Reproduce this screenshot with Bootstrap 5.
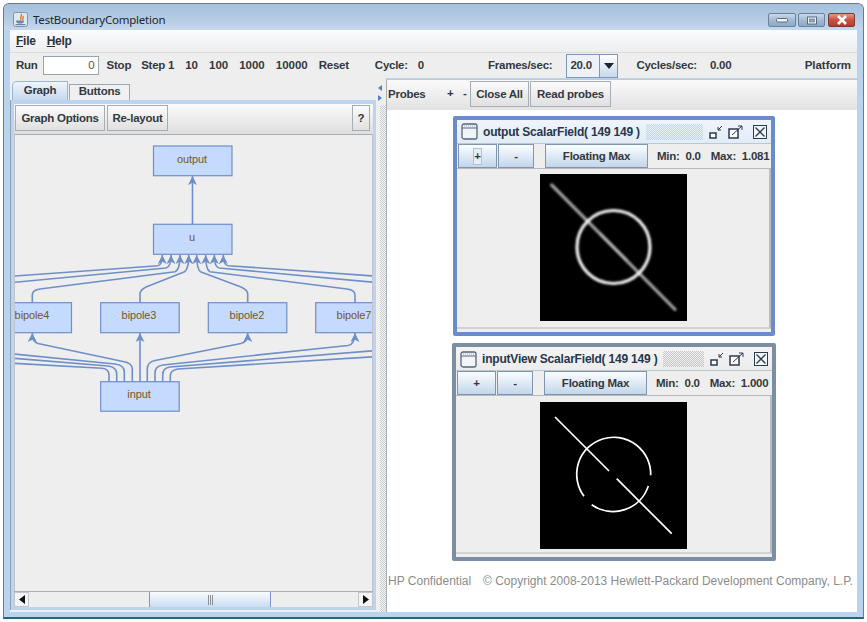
<!DOCTYPE html>
<html lang="en">
<head>
  <meta charset="UTF-8">
  <meta name="viewport" content="width=device-width, initial-scale=1">
  <title>TestBoundaryCompletion</title>
  <link href="https://cdn.jsdelivr.net/npm/bootstrap@5.3.0/dist/css/bootstrap.min.css" rel="stylesheet">
  <style>
    html, body { height: 100%; overflow: hidden; background: #fff; }
    body { font-family: "Liberation Sans", Arial, sans-serif; font-size: 11.5px; letter-spacing: -.25px; font-weight: 700; color: #33383f; }

    /* outer window */
    .app-win { position: relative; margin: 3px 3px 0 3px; width: 861px; height: 616px; border: 1px solid #6e7a86; border-bottom: 2px solid #1d6a78; border-radius: 6px 6px 0 0; background: #bad3ee; padding: 0 6px 5px 6px; overflow: hidden; }
    .win-title { height: 26px; margin: 0 -6px; padding: 8px 8px 0 9px; background: linear-gradient(#a6c0dc, #b5cce4 60%, #c5d9ee); font-weight: 400; color: #22262b; }
    .win-title-text { margin: -1px 0 0 5px; font-family: "Noto Sans", sans-serif; font-size: 11.5px; letter-spacing: -.22px; }
    .win-btns { margin-top: 1px; }
    .win-ctl { height: 14px; border: 1px solid #6d829a; border-radius: 2px; background: linear-gradient(#c9d9ea, #a3bad2 50%, #8ea8c4); }
    .win-ctl-min { width: 28px; margin-right: 2px; }
    .win-ctl-max { width: 27px; margin-right: 3px; }
    .win-ctl-close { width: 27px; border-color: #7c3a33; background: linear-gradient(#e2988a, #cc5040 50%, #b83a2c); }
    .menu-row { height: 22px; padding-left: 6px; gap: 11px; background: linear-gradient(#fbfcfd, #eceef0); font-size: 12px; color: #2f3338; }
    .menu-row u { text-decoration-thickness: 1px; }
    .tool-row { height: 26px; padding: 1px 0 0 6px; gap: 11px; background: #eeeeee; border-top: 1px solid #dcdcdc; }
    .tool-txt { padding: 0; border: 0; font: inherit; letter-spacing: inherit; color: inherit; border-radius: 0; white-space: nowrap; }
    .tool-num { letter-spacing: 0; }
    .tool-stop { margin-right: -1px; }
    .run-box { width: 56px; height: 19px; margin: -2px -3px 0 -6px; padding: 0 3px; border: 1px solid #9aa3ad; border-radius: 0; font: 400 11.5px "Liberation Sans", sans-serif; text-align: right; color: #555; }
    .gap-cycle { margin-left: 15px; }
    .gap-val { margin-left: -1px; }
    .gap-frames { margin-left: 53px; }
    .gap-rate { margin-left: 2px; }
    .fps-box { width: 52px; height: 24px; margin: -1px 7px 0 3px; border: 1px solid #7b98b8; background: #eef2f6; }
    .fps-val { width: 33px; padding-left: 3px; border-right: 1px solid #7b98b8; }
    .fps-drop { background: linear-gradient(#fff, #c6d8ea); }
    .plat-lbl { margin-right: 6px; letter-spacing: -.05px; }

    /* left pane */
    .main-row { height: 534px; }
    .left-pane { width: 367px; background: #eeeeee; padding: 0 0 2px 1px; flex-shrink: 0; }
    .tab-row { height: 22px; padding-left: 1px; border: 0; gap: 1px; }
    .tab-row .nav-link { padding: 0; margin: 0; height: 16px; width: 61px; border: 1px solid #9aa7b5; border-bottom: 0; border-radius: 0; text-align: center; font-size: 11.5px; line-height: 12px; color: #33383f; background: #f0f0f0; }
    .tab-row .nav-link.active { width: 56px; height: 19px; line-height: 17px; border-radius: 5px 0 0 0; border-color: #9ab5d3; background: linear-gradient(#f0f5fa, #c4d9f0); color: #33383f; }
    .tab-body { width: 365px; height: 510px; border: 3px solid #bcd4ef; border-top-width: 4px; box-shadow: -1px 0 0 #8fa0b3; background: #eee; }
    .graph-bar { height: 30px; gap: 2px; padding: 1px 3px 2px 1px; background: linear-gradient(#fbfbfb, #dedede); }
    .flat-btn { padding: 2px 0 0; border: 1px solid #a6adb5; border-radius: 0; background: linear-gradient(#fbfbfb, #e0e0e0); font: inherit; letter-spacing: inherit; color: #33383f; white-space: nowrap; }
    .graph-bar .flat-btn { height: 26px; }
    .btn-options { width: 90px; }
    .btn-layout { width: 61px; }
    .help-btn { width: 18px; }
    .graph-view { height: 457px; border-top: 1px solid #a8aeb4; border-left: 1px solid #c0c4c8; border-right: 1px solid #c0c4c8; background: #eeeeee; overflow: hidden; }
    .graph-view svg { display: block; }
    .node-txt { font: 400 11px "Liberation Sans", sans-serif; letter-spacing: -.1px; fill: #7a5528; text-anchor: middle; }
    .edge { fill: none; stroke: #6f8fc9; stroke-width: 1.6; }

    .h-scroll { height: 16px; border-top: 1px solid #a8aeb4; background: #f0f0f0; }
    .scroll-end { width: 15px; background: #f4f4f4; border: 1px solid #c2c6ca; }
    .scroll-track { background: #eeeeee; padding-left: 120px; padding-right: 87px; }
    .scroll-thumb { height: 100%; border-left: 1px solid #7a9acb; border-right: 1px solid #7a9acb; background: linear-gradient(#fafcfe, #c8dcf1); }
    .grip-bar { width: 5px; height: 10px; background: repeating-linear-gradient(90deg, #8c9198 0 1px, transparent 1px 2px); }

    /* splitter */
    .split-bar { width: 9px; background: #eee; padding-top: 7px; flex-shrink: 0; }
    .split-dots { flex: 1; margin-left: 3px; margin-top: 4px; background: repeating-conic-gradient(#c6cacd 0 25%, #f6f6f6 0 50%) 0 0 / 2px 2px; }

    /* right pane */
    .right-pane { width: 471px; background: #fff; border-left: 1px solid #a8aeb4; margin-top: 1px; border-top: 1px solid #c5c9ce; }
    .probe-bar { height: 30px; padding: 1px 0 3px 1px; background: linear-gradient(#fafafa, #e2e2e2); }
    .probe-bar .flat-btn { height: 26px; }
    .probe-lbl { width: 59px; padding-top: 1px; }
    .probe-pm { width: 16px; }
    .probe-mn { width: 7px; }
    .btn-close-all { width: 59px; }
    .btn-read { width: 81px; margin-left: 1px; }
    .probe-desk { flex: 1; }
    .probe-win { position: absolute; left: 66px; width: 322px; border: 4px solid #6a8ccb; border-radius: 2px; background: #eee; }
    .probe-win.first { top: 6px; height: 220px; }
    .probe-win.second { top: 233px; left: 65px; width: 324px; height: 218px; border-color: #7b8ea3; }
    .probe-head { height: 23px; padding: 0 3px 0 4px; background: linear-gradient(#eff4fa, #e2ecf6); font-size: 12px; letter-spacing: -.2px; color: #27364d; }
    .probe-win.second .probe-head { padding-top: 1px; background: linear-gradient(#f4f4f4, #ececec); }
    .probe-name { margin-left: 5px; white-space: nowrap; }
    .probe-grip { flex: 1; height: 16px; margin: 0 6px; background: repeating-conic-gradient(#c3d4ea 0 25%, transparent 0 50%) 0 0 / 2px 2px; }
    .probe-win.second .probe-grip { background: repeating-conic-gradient(#c8c8c8 0 25%, transparent 0 50%) 0 0 / 2px 2px; }
    .ico-max { margin-left: 5px; }
    .ico-close { margin-left: 10px; }
    .probe-tools { height: 26px; border-top: 1px solid #b9c7d6; border-bottom: 1px solid #b4bac0; background: #eee; padding-left: 1px; white-space: nowrap; overflow: hidden; }
    .blue-btn { height: 100%; padding: 2px 0 0; border: 1px solid #7f96b1; border-radius: 0; background: linear-gradient(#fbfdff, #c3d6ea); font: inherit; letter-spacing: inherit; color: #33383f; }
    .btn-plus { width: 39px; }
    .btn-minus { width: 36px; margin-left: 1px; }
    .btn-float { width: 103px; margin-left: 11px; }
    .focus-mark { display: inline-block; width: 9px; height: 17px; line-height: 15px; border: 1px solid #b3c0cf; background: #e6edf4; }
    .probe-stats { margin-left: 9px; padding-top: 1px; }
    .probe-stats span + span { margin-left: 10px; }
    .probe-view { height: 160px; padding: 5px 0 0 83px; border-right: 2px solid #b8bcc1; border-bottom: 2px solid #d0d3d6; }
    .probe-win.second .probe-view { padding: 6px 0 0 84px; height: 158px; }
    .field-img { display: block; width: 147px; height: 147px; background: #000; }
    .copy-line { height: 42px; padding: 0 0 22px 1px; font-weight: 400; font-size: 12px; letter-spacing: 0; color: #8b8b8b; white-space: nowrap; }
    .copy-gap { width: 95px; }
  </style>
</head>
<body>
  <div class="app-win d-flex flex-column">

    <div class="win-title d-flex align-items-start">
      <svg width="15" height="15" viewBox="0 0 15 15">
        <rect x=".5" y=".5" width="14" height="14" rx="2" fill="#dfe7f0" stroke="#7f93aa"/>
        <path d="M8 2c2 2-2 3 0 6M10 4c1 1.5-1 2 0 4" fill="none" stroke="#d9772b" stroke-width="1.4"/>
        <path d="M3 8.5h8c0 2.5-1.5 3-4 3s-4-.5-4-3z" fill="#6d86a6"/>
        <rect x="2.5" y="12" width="10" height="1.2" fill="#6d86a6"/>
      </svg>
      <span class="win-title-text">TestBoundaryCompletion</span>
      <div class="win-btns ms-auto d-flex">
        <div class="win-ctl win-ctl-min d-flex align-items-center justify-content-center">
          <svg width="12" height="6"><rect x=".5" y="1.5" width="11" height="3.5" rx="1" fill="#f4f7fa" stroke="#566b82"/></svg>
        </div>
        <div class="win-ctl win-ctl-max d-flex align-items-center justify-content-center">
          <svg width="12" height="9"><rect x="1.5" y="1" width="9" height="7" fill="#f4f7fa" stroke="#566b82"/><rect x="3.5" y="3" width="5" height="3" fill="#8ea8c4" stroke="#566b82" stroke-width=".6"/></svg>
        </div>
        <div class="win-ctl win-ctl-close d-flex align-items-center justify-content-center">
          <svg width="14" height="10"><path d="M3 1l8 8M11 1l-8 8" stroke="#fff" stroke-width="2.6"/></svg>
        </div>
      </div>
    </div>

    <div class="menu-row d-flex align-items-center">
      <span><u>F</u>ile</span>
      <span><u>H</u>elp</span>
    </div>

    <div class="tool-row d-flex align-items-center">
      <span>Run</span>
      <input class="form-control run-box" type="text" value="0">
      <button class="btn tool-txt tool-stop">Stop</button>
      <button class="btn tool-txt">Step 1</button>
      <button class="btn tool-txt tool-num">10</button>
      <button class="btn tool-txt tool-num">100</button>
      <button class="btn tool-txt tool-num">1000</button>
      <button class="btn tool-txt tool-num">10000</button>
      <button class="btn tool-txt">Reset</button>
      <span class="gap-cycle">Cycle:</span>
      <span class="gap-val">0</span>
      <span class="gap-frames">Frames/sec:</span>
      <div class="fps-box d-flex align-items-stretch">
        <div class="fps-val d-flex align-items-center">20.0</div>
        <div class="fps-drop flex-grow-1 d-flex align-items-center justify-content-center">
          <svg width="10" height="6"><path d="M0 0h10L5 6z" fill="#1c2430"/></svg>
        </div>
      </div>
      <span>Cycles/sec:</span>
      <span class="gap-rate">0.00</span>
      <span class="plat-lbl ms-auto">Platform</span>
    </div>

    <div class="main-row d-flex">
      <div class="left-pane">
        <ul class="nav nav-tabs tab-row align-items-end">
          <li class="nav-item"><a class="nav-link active" href="#">Graph</a></li>
          <li class="nav-item"><a class="nav-link" href="#">Buttons</a></li>
        </ul>
        <div class="tab-body d-flex flex-column">
          <div class="graph-bar d-flex align-items-start">
            <button class="btn flat-btn btn-options">Graph Options</button>
            <button class="btn flat-btn btn-layout">Re-layout</button>
            <button class="btn flat-btn help-btn ms-auto">?</button>
          </div>
          <div class="graph-view flex-grow-1">
            <svg width="358" height="456" viewBox="15 135 358 456">
              <defs>
                <marker id="tip" viewBox="0 0 10 10" refX="10" refY="5" markerWidth="9" markerHeight="9" markerUnits="userSpaceOnUse" orient="auto">
                  <path d="M10 5L0 0l2.5 5L0 10z" fill="#6f8fc9"/>
                </marker>
              </defs>
              <g>
                <path class="edge" marker-end="url(#tip)" d="M192.5 224V176"/>
                <path class="edge" marker-end="url(#tip)" d="M14 276L158 265.7Q162.3 265 162.3 255"/>
                <path class="edge" marker-end="url(#tip)" d="M14 282.3L166 268Q171 267 171 255"/>
                <path class="edge" marker-end="url(#tip)" d="M32.3 303V295Q32.3 290 40 289L175 271.7Q180 270 180 255"/>
                <path class="edge" marker-end="url(#tip)" d="M140 303V294Q140 290 146 287L184 272Q188.7 270 188.7 255"/>
                <path class="edge" marker-end="url(#tip)" d="M247.7 303V294Q247.7 290 241 287L201 272Q196.7 270 196.7 255"/>
                <path class="edge" marker-end="url(#tip)" d="M355 303V295Q355 290 347 289L210 271.7Q205.7 270 205.7 255"/>
                <path class="edge" marker-end="url(#tip)" d="M374 282.3L219 268Q214.3 267 214.3 255"/>
                <path class="edge" marker-end="url(#tip)" d="M374 276L228 265.7Q223.3 265 223.3 255"/>

                <path class="edge" marker-end="url(#tip)" d="M132.3 382V369Q132.3 363 123 361.5L38 343.5Q32.3 342 32.3 333"/>
                <path class="edge" marker-end="url(#tip)" d="M140 382V333"/>
                <path class="edge" marker-end="url(#tip)" d="M147.3 382V369Q147.3 362 155 360.5L241 343.5Q247.7 342 247.7 333"/>
                <path class="edge" marker-end="url(#tip)" d="M155 382V373Q155 366 163 365L348 345.5Q355 344.5 355 333"/>
                <path class="edge" d="M124.3 382V372Q124.3 365 115 364L14 354"/>
                <path class="edge" d="M116.7 382V374Q116.7 367 108 366L14 358.3"/>
                <path class="edge" d="M109 382V375Q109 369 102 368.3L14 363.3"/>
                <path class="edge" d="M162.7 382V375Q162.7 368 170 367L374 350.7"/>
                <path class="edge" d="M170.3 382V376Q170.3 370 178 369L374 356.7"/>
              </g>
              <g fill="#c4dafe" stroke="#6f8fc9" stroke-width="1.2">
                <rect x="153.5" y="146" width="78.5" height="29.7"/>
                <rect x="153.5" y="224.3" width="78.5" height="30"/>
                <rect x="-7" y="302.7" width="78.5" height="30"/>
                <rect x="100.7" y="302.7" width="78.5" height="30"/>
                <rect x="208.3" y="302.7" width="78.5" height="30"/>
                <rect x="315.7" y="302.7" width="78.5" height="30"/>
                <rect x="100.7" y="381.7" width="78.5" height="29.5"/>
              </g>
              <text class="node-txt" x="192" y="163">output</text>
              <text class="node-txt" x="192" y="241">u</text>
              <text class="node-txt" x="32" y="319">bipole4</text>
              <text class="node-txt" x="139" y="319">bipole3</text>
              <text class="node-txt" x="247" y="319">bipole2</text>
              <text class="node-txt" x="354" y="319">bipole7</text>
              <text class="node-txt" x="139" y="398">input</text>
            </svg>
          </div>
          <div class="h-scroll d-flex">
            <div class="scroll-end d-flex align-items-center justify-content-center">
              <svg width="6" height="9"><path d="M6 0v9L0 4.5z" fill="#111"/></svg>
            </div>
            <div class="scroll-track flex-grow-1 d-flex">
              <div class="scroll-thumb flex-grow-1 d-flex align-items-center justify-content-center"><div class="grip-bar"></div></div>
            </div>
            <div class="scroll-end d-flex align-items-center justify-content-center">
              <svg width="6" height="9"><path d="M0 0v9l6-4.5z" fill="#111"/></svg>
            </div>
          </div>
        </div>
      </div>

      <div class="split-bar d-flex flex-column">
        <svg width="6" height="16" viewBox="0 0 6 16">
          <path d="M5 0v6L1 3z" fill="#4f7fc0"/><path d="M1 10v6l4-3z" fill="#4f7fc0"/>
        </svg>
        <div class="split-dots"></div>
      </div>

      <div class="right-pane d-flex flex-column">
        <div class="probe-bar d-flex align-items-center">
          <span class="probe-lbl">Probes</span>
          <span class="probe-pm">+</span>
          <span class="probe-mn">-</span>
          <button class="btn flat-btn btn-close-all">Close All</button>
          <button class="btn flat-btn btn-read">Read probes</button>
        </div>

        <div class="probe-desk position-relative">
          <div class="probe-win first">
            <div class="probe-head d-flex align-items-center">
              <svg width="17" height="17" viewBox="0 0 17 17"><rect x="1" y="1" width="15" height="15" rx="2" fill="#f2f5f8" stroke="#56667a" stroke-width="1.3"/><path d="M1 5h15" stroke="#56667a"/><path d="M3 3h11" stroke="#9aa8b8" stroke-dasharray="1 1"/></svg>
              <span class="probe-name">output ScalarField( 149 149 )</span>
              <div class="probe-grip"></div>
              <svg width="14" height="14" viewBox="0 0 14 14"><rect x="1" y="8" width="6" height="5" fill="#fff" stroke="#2c3a50" stroke-width="1.5"/><path d="M13 1L9 5M9 2v3h3" fill="none" stroke="#2c3a50"/></svg>
              <svg class="ico-max" width="15" height="14" viewBox="0 0 15 14"><rect x="1" y="4" width="9" height="9" fill="#fff" stroke="#2c3a50" stroke-width="1.5"/><path d="M4 10L14 1M10 1h4v4" fill="none" stroke="#2c3a50"/></svg>
              <svg class="ico-close" width="15" height="14" viewBox="0 0 15 14"><rect x=".5" y=".5" width="13" height="13" fill="#f2f6fa" stroke="#2c3a50"/><path d="M2.5 2.5l9 9M11.5 2.5l-9 9" stroke="#2c3a50" stroke-width="1.3"/></svg>
            </div>
            <div class="probe-tools d-flex align-items-center">
              <button class="btn blue-btn btn-plus"><span class="focus-mark">+</span></button>
              <button class="btn blue-btn btn-minus">-</button>
              <button class="btn blue-btn btn-float">Floating Max</button>
              <div class="probe-stats"><span>Min:&nbsp; 0.0</span><span>Max:&nbsp; 1.081</span></div>
            </div>
            <div class="probe-view">
              <svg class="field-img" viewBox="0 0 147 147">
                <defs><filter id="soft"><feGaussianBlur stdDeviation="1"/></filter></defs>
                <g filter="url(#soft)" fill="none">
                  <path d="M11.7 11L135 135.3" stroke="#a2a2a2" stroke-width="3.2" stroke-linecap="round"/>
                  <circle cx="73.5" cy="73" r="36.5" stroke="#f4f4f4" stroke-width="3.2"/>
                  <path d="M60 59.5L87 86.5" stroke="#b8b8b8" stroke-width="2.6"/>
                </g>
              </svg>
            </div>
          </div>

          <div class="probe-win second">
            <div class="probe-head d-flex align-items-center">
              <svg width="17" height="17" viewBox="0 0 17 17"><rect x="1" y="1" width="15" height="15" rx="2" fill="#f2f5f8" stroke="#56667a" stroke-width="1.3"/><path d="M1 5h15" stroke="#56667a"/><path d="M3 3h11" stroke="#9aa8b8" stroke-dasharray="1 1"/></svg>
              <span class="probe-name">inputView ScalarField( 149 149 )</span>
              <div class="probe-grip"></div>
              <svg width="14" height="14" viewBox="0 0 14 14"><rect x="1" y="8" width="6" height="5" fill="#fff" stroke="#2c3a50" stroke-width="1.5"/><path d="M13 1L9 5M9 2v3h3" fill="none" stroke="#2c3a50"/></svg>
              <svg class="ico-max" width="15" height="14" viewBox="0 0 15 14"><rect x="1" y="4" width="9" height="9" fill="#fff" stroke="#2c3a50" stroke-width="1.5"/><path d="M4 10L14 1M10 1h4v4" fill="none" stroke="#2c3a50"/></svg>
              <svg class="ico-close" width="15" height="14" viewBox="0 0 15 14"><rect x=".5" y=".5" width="13" height="13" fill="#f2f6fa" stroke="#2c3a50"/><path d="M2.5 2.5l9 9M11.5 2.5l-9 9" stroke="#2c3a50" stroke-width="1.3"/></svg>
            </div>
            <div class="probe-tools d-flex align-items-center">
              <button class="btn blue-btn btn-plus">+</button>
              <button class="btn blue-btn btn-minus">-</button>
              <button class="btn blue-btn btn-float">Floating Max</button>
              <div class="probe-stats"><span>Min:&nbsp; 0.0</span><span>Max:&nbsp; 1.000</span></div>
            </div>
            <div class="probe-view">
              <svg class="field-img" viewBox="0 0 147 147">
                <g fill="none" stroke="#fff" stroke-width="1.7">
                  <path d="M15 15L69 69M76.7 76.7L131.7 131.7"/>
                  <path d="M44 94.3A37 37 0 1 1 110.7 73.3"/>
                  <path d="M108.3 84A37 37 0 0 1 51.7 102.7"/>
                </g>
              </svg>
            </div>
          </div>
        </div>

        <div class="copy-line d-flex align-items-end">
          <span class="copy-gap">HP Confidential</span>
          <span>© Copyright 2008-2013 Hewlett-Packard Development Company, L.P.</span>
        </div>
      </div>
    </div>
  </div>
  <script src="https://cdn.jsdelivr.net/npm/bootstrap@5.3.0/dist/js/bootstrap.bundle.min.js"></script>
</body>
</html>
